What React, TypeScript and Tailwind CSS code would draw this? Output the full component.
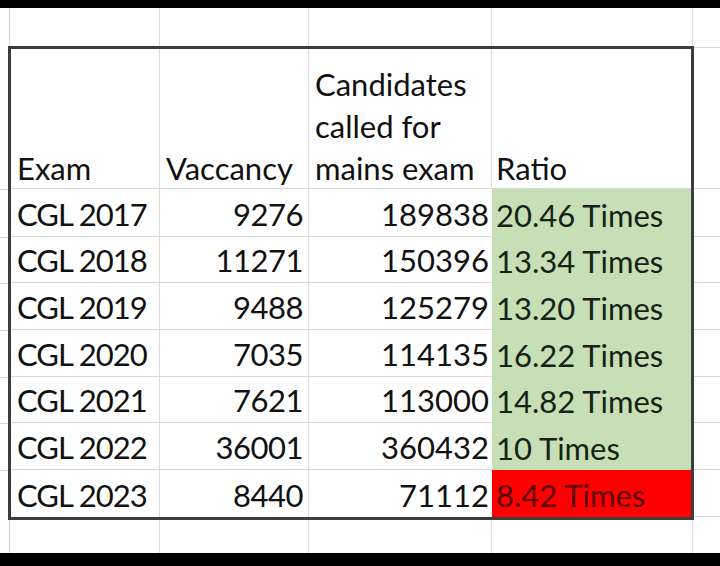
import React from 'react';

const rows = [
  { exam: 'CGL 2017', vac: '9276', cand: '189838', ratio: '20.46 Times' },
  { exam: 'CGL 2018', vac: '11271', cand: '150396', ratio: '13.34 Times' },
  { exam: 'CGL 2019', vac: '9488', cand: '125279', ratio: '13.20 Times' },
  { exam: 'CGL 2020', vac: '7035', cand: '114135', ratio: '16.22 Times' },
  { exam: 'CGL 2021', vac: '7621', cand: '113000', ratio: '14.82 Times' },
  { exam: 'CGL 2022', vac: '36001', cand: '360432', ratio: '10 Times' },
  { exam: 'CGL 2023', vac: '8440', cand: '71112', ratio: '8.42 Times', bad: true },
];

const rowH = ['h-[48px]', 'h-[46px]', 'h-[47px]', 'h-[47px]', 'h-[46px]', 'h-[47px]', 'h-[47px]'];

// plain empty spreadsheet strip, used above and below the table
function EmptyStrip({ height }: { height: string }) {
  return (
    <div className={`flex ${height}`}>
      <div className="w-[10px] border-r border-[#d9d9d9]" />
      <div className="w-[150px] border-r border-[#d9d9d9]" />
      <div className="w-[149px] border-r border-[#d9d9d9]" />
      <div className="w-[183px] border-r border-[#d9d9d9]" />
      <div className="w-[201px] border-r border-[#d9d9d9]" />
      <div className="flex-1" />
    </div>
  );
}

export default function App() {
  return (
    <div
      className="w-[720px] h-[566px] bg-white flex flex-col overflow-hidden text-[#111]"
      style={{ fontFamily: 'Lato, "Open Sans", sans-serif' }}
    >
      <div className="h-[8px] bg-black" />
      <EmptyStrip height="h-[38px]" />

      <div className="flex">
        {/* left gutter */}
        <div className="w-[8px] flex flex-col pt-[143px]">
          {rowH.map((h, i) => (
            <div key={i} className={`${h} border-t border-[#d9d9d9]`} />
          ))}
        </div>

        {/* table */}
        <div className="w-[686px] border-[3px] border-[#3d3d3d] flex flex-col text-[31px] leading-none">
          <div className="flex h-[140px] border-b border-[#d9d9d9]">
            <div className="w-[149px] border-r border-[#d9d9d9] flex items-end pl-[6px] pb-[4px]">Exam</div>
            <div className="w-[149px] border-r border-[#d9d9d9] flex items-end pl-[6px] pb-[4px]">Vaccancy</div>
            <div className="w-[183px] border-r border-[#d9d9d9] flex flex-col justify-end pl-[6px] pb-[4px]">
              <span className="leading-[42px]">Candidates</span>
              <span className="leading-[42px] mb-[6px]">called for</span>
              <span>mains exam</span>
            </div>
            <div className="flex-1 flex items-end pl-[4px] pb-[4px]">Ratio</div>
          </div>

          {rows.map((r, i) => (
            <div key={r.exam} className={`flex ${rowH[i]}`}>
              <div
                className={`w-[149px] border-r border-[#d9d9d9] flex items-end pl-[6px] pb-[6px] tracking-[-1px] ${
                  i < 6 ? 'border-b' : ''
                }`}
              >
                {r.exam}
              </div>
              <div
                className={`w-[149px] border-r border-[#d9d9d9] flex items-end justify-end pr-[5px] pb-[6px] tracking-[-0.5px] ${
                  i < 6 ? 'border-b' : ''
                }`}
              >
                {r.vac}
              </div>
              <div className={`w-[183px] flex items-end justify-end pr-[3px] pb-[6px] ${i < 6 ? 'border-b border-[#d9d9d9]' : ''}`}>
                {r.cand}
              </div>
              <div
                className={`flex-1 flex items-end pl-[4px] pb-[6px] ${
                  r.bad ? 'bg-[#fe0000] text-[#5a0606]' : 'bg-[#c6dfb5] text-[#172217]'
                }`}
              >
                {r.ratio}
              </div>
            </div>
          ))}
        </div>

        {/* right gutter */}
        <div className="flex-1 flex flex-col">
          <div className="h-[2px] border-b border-[#d9d9d9]" />
          <div className="h-[141px] border-b border-[#d9d9d9]" />
          {rowH.map((h, i) => (
            <div key={i} className={`${h} border-b border-[#d9d9d9]`} />
          ))}
        </div>
      </div>

      <div className="flex-1 flex flex-col">
        <div className="flex-1">
          <EmptyStrip height="h-full" />
        </div>
        <div className="h-[13px] bg-black" />
      </div>
    </div>
  );
}
